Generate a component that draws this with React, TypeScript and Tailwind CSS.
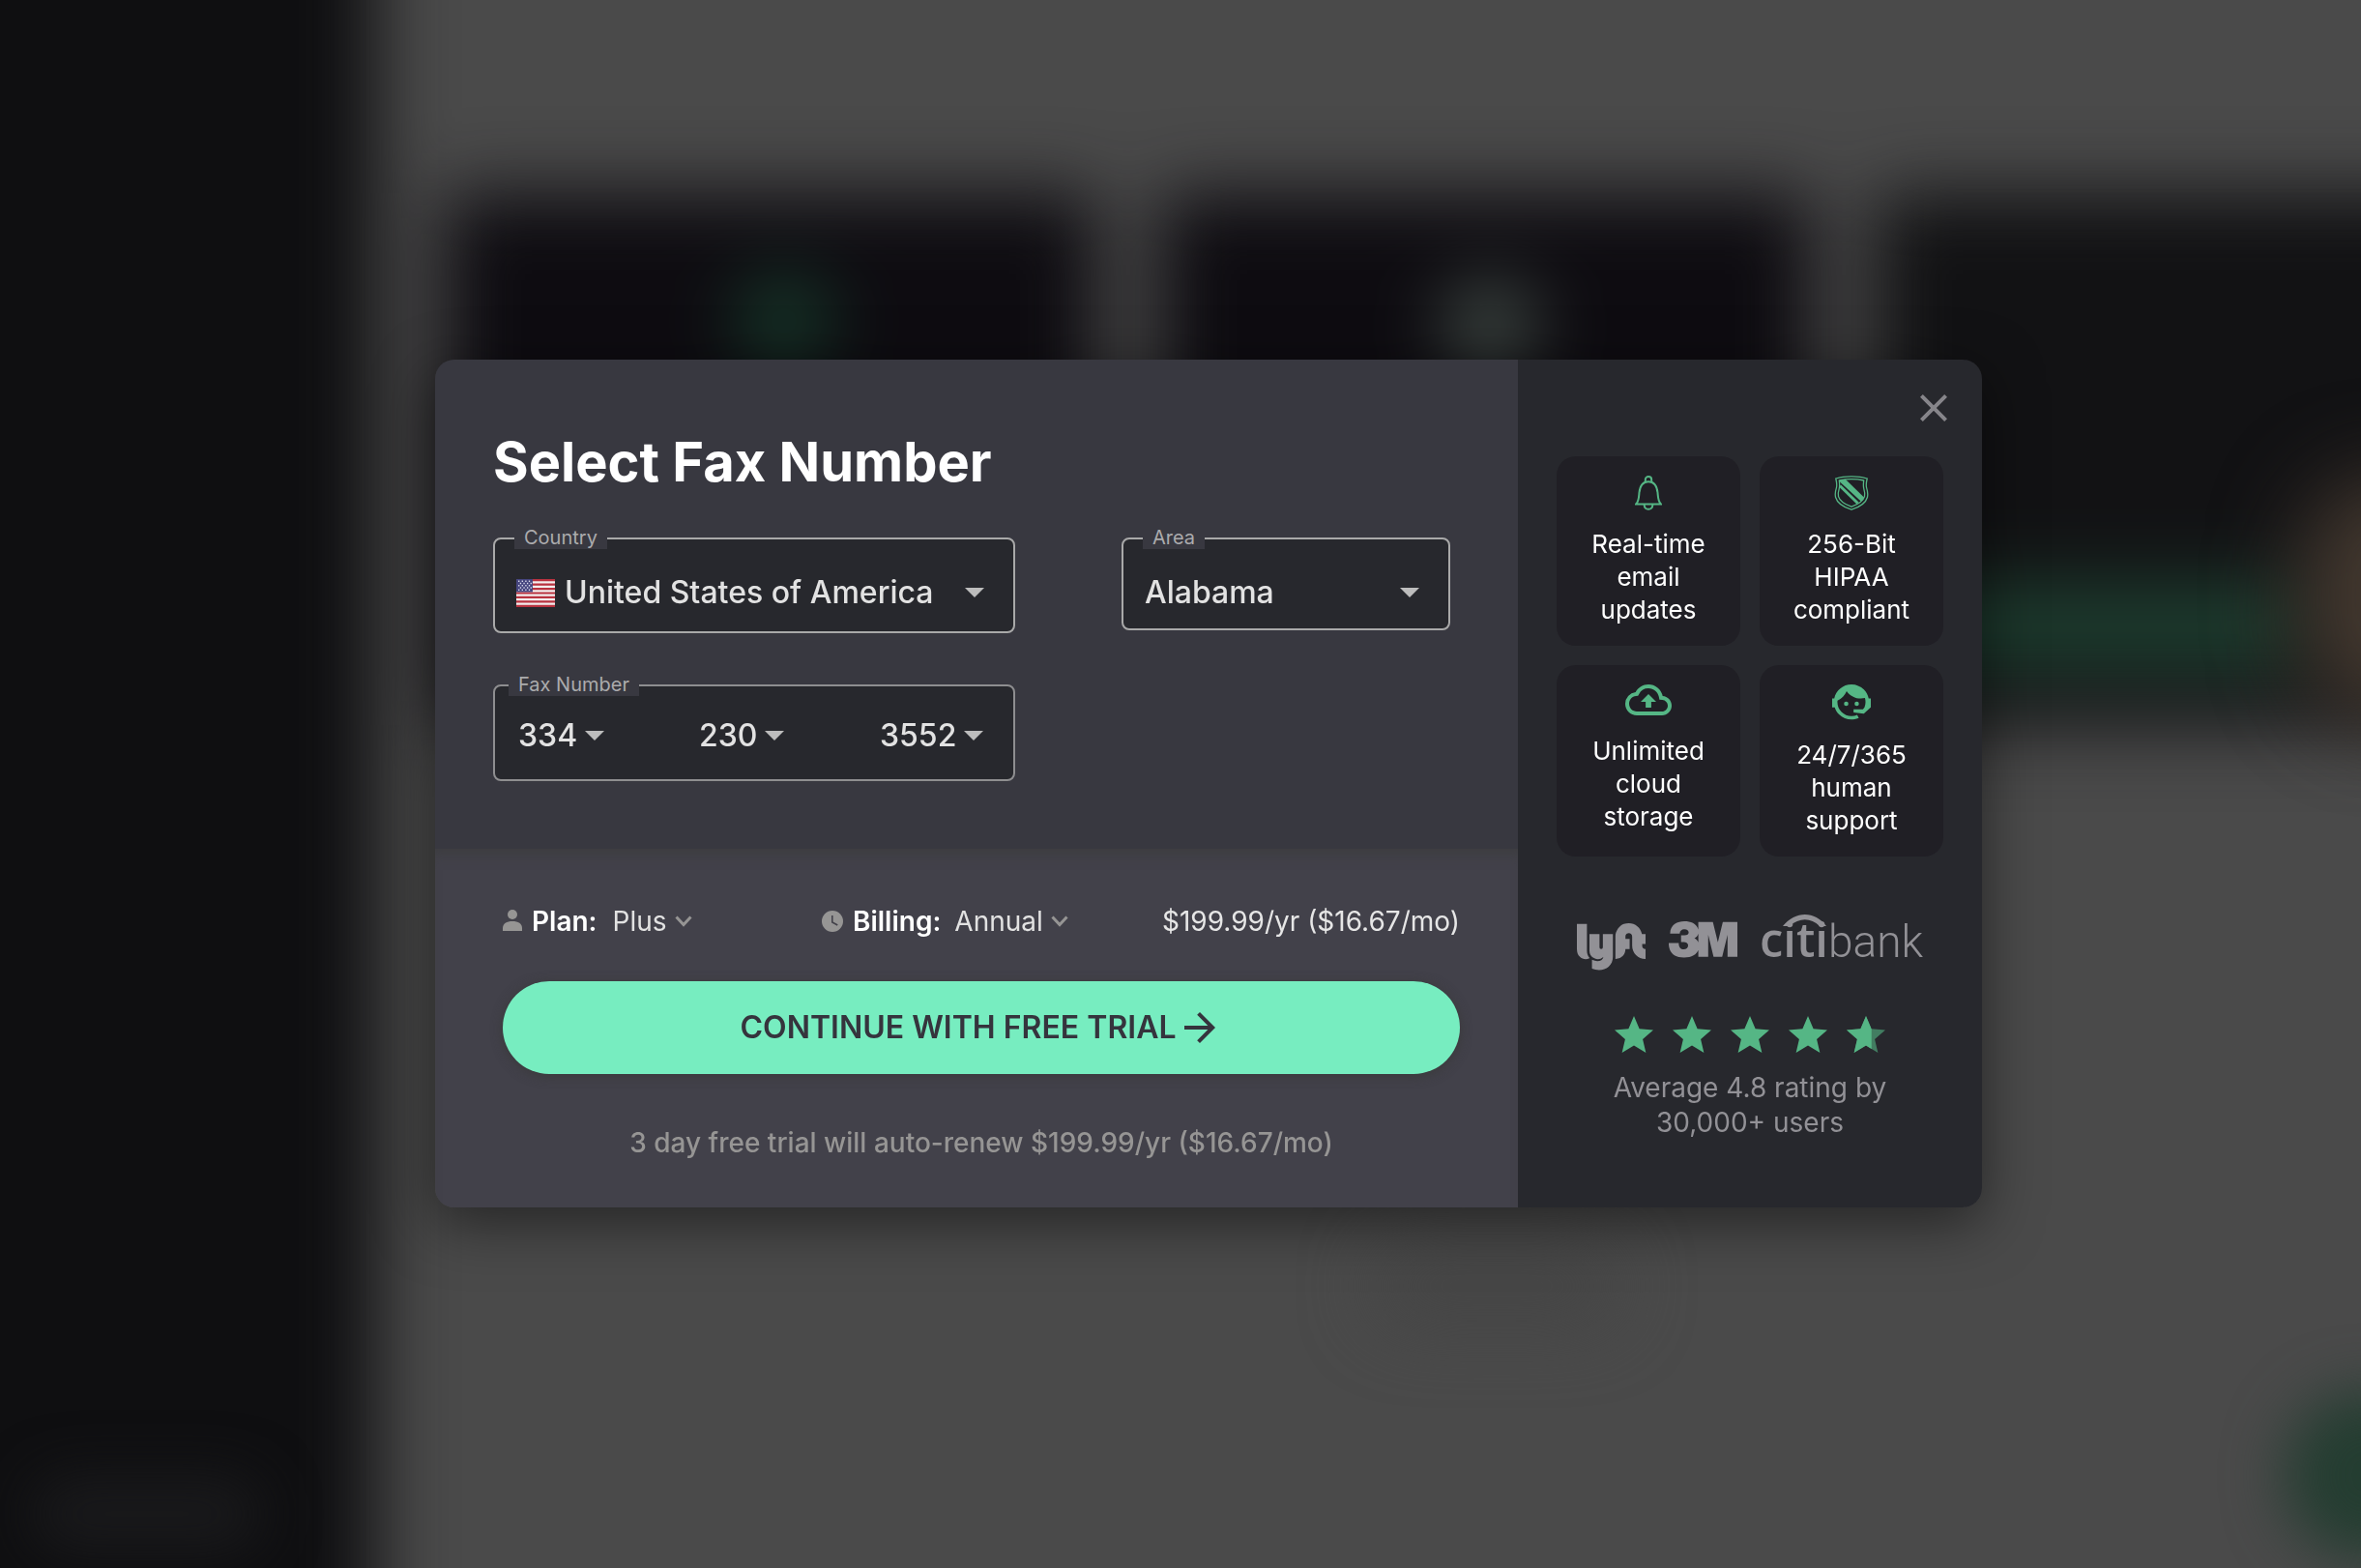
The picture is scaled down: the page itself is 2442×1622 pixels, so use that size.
import type { ReactNode } from "react";
import { MdArrowForward, MdClose, MdOutlineCloudUpload, MdStar } from "react-icons/md";
import { Si3M, SiLyft } from "react-icons/si";

type Feature = {
  label: string;
  icon: ReactNode;
};

const FEATURES: Feature[] = [
  { label: "Real-time email updates", icon: <BellIcon /> },
  { label: "256-Bit HIPAA compliant", icon: <ShieldIcon /> },
  {
    label: "Unlimited cloud storage",
    icon: <MdOutlineCloudUpload viewBox="0 4 24 17" className="h-[34px] w-12" />,
  },
  { label: "24/7/365 human support", icon: <AgentIcon /> },
];

const FAX_PARTS = [
  { label: "Area code", value: "334" },
  { label: "Prefix", value: "230" },
  { label: "Line number", value: "3552" },
];

function Caret() {
  return (
    <svg viewBox="0 0 20 10" className="pointer-events-none h-2.5 w-5 shrink-0 fill-[#bdbdbd]">
      <path d="M0 0h20L10 10z" />
    </svg>
  );
}

function Chevron() {
  return (
    <svg viewBox="0 0 18 12" className="pointer-events-none h-3 w-[18px] shrink-0">
      <path d="M1.5 1.5 9 9.5l7.5-8" fill="none" stroke="#969594" strokeWidth="3" />
    </svg>
  );
}

function BellIcon() {
  return (
    <svg viewBox="0 0 28 36" className="h-9 w-7" fill="none" stroke="#55b685" strokeWidth="2">
      <path d="M10.800 7V4.200C10.800 2.200 12.200 1 14 1s3.200 1.200 3.200 3.200V7" />
      <path d="M1 29.600h26c-2.600-2.200-3-6-3.300-10-.4-7-2.500-13.300-9.700-13.300S4.700 12.600 4.300 19.600C4 23.600 3.600 27.400 1 29.600z" />
      <path d="M9.600 30c.2 3 2 4.800 4.400 4.800s4.200-1.800 4.400-4.800" />
    </svg>
  );
}

function ShieldIcon() {
  return (
    <svg viewBox="0 0 36 36" className="size-9" fill="none" stroke="#55b685">
      <path
        strokeWidth="1.300"
        d="M1.800 3C7 1.300 12 .8 18 .8S29 1.300 34.200 3c-.8 3.500-1.500 6.600-.6 9.600 1.200 3.800 1.600 6.800.8 9.900C32.600 29 25 33 18 35.200 11 33 3.400 29 1.600 22.500c-.8-3.100-.4-6.100.8-9.900.9-3 .2-6.100-.6-9.600z"
      />
      <path
        strokeWidth="1.300"
        d="M5.300 5C9.600 4 13.500 3.700 18 3.700S26.400 4 30.700 5c-.4 3.300-.7 6 .1 8.600 1 3.400 1.400 5.600.7 8C30 26.600 24 30 18 32.200 12 30 6 26.600 4.500 21.600c-.7-2.400-.3-4.600.7-8C6 11 5.700 8.300 5.300 5z"
      />
      <path fill="#55b685" stroke="none" d="M6 4.800c2-.6 3.800-.8 6-.9L31 22.500c-.6 1.900-1.400 3-3 4.200L6 6.500z" />
      <path strokeWidth="3" d="M6 10.500 24.500 28.500" />
    </svg>
  );
}

function AgentIcon() {
  return (
    <svg viewBox="2 2.9 20 19" className="h-[38px] w-10" fill="currentColor">
      <path d="M18.720 14.760c.35-.85.54-1.760.54-2.760 0-.72-.11-1.410-.3-2.050-.65.15-1.330.23-2.040.23-3.060 0-5.770-1.510-7.420-3.840-.89 2.160-2.590 3.920-4.730 4.880-.04.25-.04.52-.04.78A7.270 7.270 0 0 0 12 19.270c1.050 0 2.060-.23 2.970-.64.57 1.090.83 1.630.81 1.630-1.640.55-2.910.82-3.780.82-2.420 0-4.730-.95-6.430-2.660-1.040-1.040-1.810-2.310-2.240-3.690H2v-4.550h1.090C3.930 6.040 7.600 2.920 12 2.920c2.400 0 4.710.95 6.420 2.660 1.270 1.260 2.120 2.870 2.470 4.600H22v4.550h-.06L18.380 18l-5.300-.6v-1.670h4.830l.81-.97z" />
      <circle cx="9.270" cy="12.910" r="1.140" />
      <circle cx="14.720" cy="12.910" r="1.140" />
    </svg>
  );
}

function UsFlag() {
  return (
    <svg viewBox="0 0 39 26" preserveAspectRatio="none" className="h-[29px] w-10 shrink-0">
      <path fill="#f3eeee" d="M0 0h39v26H0z" />
      <path
        stroke="#b9323f"
        strokeWidth="2"
        d="M0 1h39M0 5h39M0 9h39M0 13h39M0 17h39M0 21h39M0 25h39"
      />
      <path fill="#46467f" d="M0 0h16.500v12H0z" />
      <path
        stroke="#d9d9ea"
        strokeWidth="1.300"
        strokeDasharray="1.300 2.200"
        d="M2 2h13M3.700 4h12M2 6h13M3.700 8h12M2 10h13"
      />
    </svg>
  );
}

function CitibankLogo() {
  return (
    <svg
      viewBox="0 0 168 58"
      className="h-[58px] w-[168px] overflow-visible fill-[#929196]"
      role="img"
      aria-label="citibank"
    >
      <path d="M23 12C36-4 56-4 68 12h-7C52 3 40 3 30 12z" />
      <text x="-1" y="44" fontSize="49" fontFamily="'Open Sans', sans-serif" fontWeight="600">
        citi
      </text>
      <text x="168" y="44" fontSize="46" fontFamily="Roboto, sans-serif" fontWeight="300" textAnchor="end">
        bank
      </text>
    </svg>
  );
}

/** Blurred dashboard that sits behind the modal. */
function Backdrop() {
  return (
    <div aria-hidden="true" className="fixed inset-0 overflow-hidden bg-[#4a4a4a]">
      <div className="flex h-full blur-[38px]">
        <div className="-my-24 -ml-24 w-[484px] shrink-0 bg-[#0f0f11]" />
        <div className="flex shrink-0 gap-[66px] pl-[72px] pt-[200px]">
          <div className="flex h-[550px] w-[674px] justify-center bg-[#0e0c11] pl-7 pt-[84px]">
            <div className="size-24 rounded-full bg-[#173a2b]" />
          </div>
          <div className="flex h-[550px] w-[674px] justify-center bg-[#0e0c11] pl-2 pt-[90px]">
            <div className="size-24 rounded-full bg-[#414b46]" />
          </div>
          <div className="h-[550px] w-[674px] bg-[#121214] pt-[404px]">
            <div className="h-[90px] w-[440px] bg-[#1d3d2f]" />
          </div>
        </div>
      </div>
      <div className="absolute -right-32 top-[490px] h-64 w-48 rounded-full bg-[#43382f] blur-[44px]" />
      <div className="absolute -right-24 bottom-2 size-44 rounded-full bg-[#243d31] blur-[30px]" />
      <div className="absolute left-[1420px] top-[1290px] h-20 w-64 rounded-full bg-[#454545] blur-[36px]" />
      <div className="absolute bottom-4 left-8 h-20 w-60 rounded-full bg-[#19191b] blur-[28px]" />
    </div>
  );
}

function NumberForm() {
  return (
    <section className="bg-[#383840] pb-[70px] pl-[60px] pr-[70px] pt-[70px]">
      <h1 className="text-[56px] font-bold leading-[72px] text-white">Select Fax Number</h1>

      <div className="mt-[42px] flex items-start justify-between">
        <div className="relative flex h-[99px] w-[540px] items-center rounded-lg border-2 border-[#a9a9a9] bg-[#27282d] pl-[22px] pr-[30px] pt-4">
          <label
            htmlFor="country"
            className="absolute -top-[18px] left-5 h-7 bg-[#383840] px-2.5 text-[20px] leading-8 text-[#ababad]"
          >
            Country
          </label>
          <UsFlag />
          <select
            id="country"
            className="ml-2.5 min-w-0 flex-1 appearance-none bg-transparent text-[32px] font-medium leading-10 text-[#e2e2e2]"
          >
            <option>United States of America</option>
          </select>
          <Caret />
        </div>

        <div className="relative flex h-24 w-[340px] items-center rounded-lg border-2 border-[#a9a9a9] bg-[#27282d] pl-[22px] pr-[30px] pt-[18px]">
          <label
            htmlFor="area"
            className="absolute -top-[18px] left-5 h-7 bg-[#383840] px-2.5 text-[20px] leading-8 text-[#ababad]"
          >
            Area
          </label>
          <select
            id="area"
            className="min-w-0 flex-1 appearance-none bg-transparent text-[32px] font-medium leading-10 text-[#e2e2e2]"
          >
            <option>Alabama</option>
          </select>
          <Caret />
        </div>
      </div>

      <div
        role="group"
        aria-labelledby="fax-label"
        className="relative mt-[53px] grid h-[100px] w-[540px] grid-cols-[187px_187px_1fr] items-center rounded-lg border-2 border-[#8e8e90] bg-[#27282d] pl-6 pt-1.5"
      >
        <span
          id="fax-label"
          className="absolute -top-[18px] left-3.5 h-7 bg-[#383840] px-2.5 text-[20px] leading-8 text-[#ababad]"
        >
          Fax Number
        </span>
        {FAX_PARTS.map((part) => (
          <div key={part.label} className="flex items-center gap-2">
            <select
              aria-label={part.label}
              className="field-sizing-content appearance-none bg-transparent text-[32px] font-medium leading-10 text-[#e2e2e2]"
            >
              <option>{part.value}</option>
            </select>
            <Caret />
          </div>
        ))}
      </div>
    </section>
  );
}

function PlanForm() {
  return (
    <section className="flex-1 bg-[#42414a] pb-[50px] pl-[70px] pr-[60px] pt-[58px] text-[28px] leading-[34px] shadow-[inset_0_14px_14px_-8px_#3d3d40]">
      <div className="flex items-center justify-between">
        <div className="flex w-[330px] items-center">
          <svg viewBox="0 0 20 24" className="h-6 w-5 fill-[#969594]">
            <circle cx="10" cy="5" r="5" />
            <path d="M0 22v-3c0-4.500 4-7 10-7s10 2.500 10 7v3z" />
          </svg>
          <label htmlFor="plan" className="ml-2.5 font-semibold text-white">
            Plan:
          </label>
          <select
            id="plan"
            className="field-sizing-content ml-4 mr-2 appearance-none bg-transparent text-[#e2e2e2]"
          >
            <option>Plus</option>
          </select>
          <Chevron />
        </div>
        <div className="flex flex-1 items-center">
          <svg viewBox="0 0 22 22" className="size-[22px]">
            <circle cx="11" cy="11" r="11" fill="#969594" />
            <path d="M10.800 5v7l5.500 3" fill="none" stroke="#42414a" strokeWidth="1.600" />
          </svg>
          <label htmlFor="billing" className="ml-2.5 font-semibold text-white">
            Billing:
          </label>
          <select
            id="billing"
            className="field-sizing-content ml-3.5 mr-2 appearance-none bg-transparent text-[#e2e2e2]"
          >
            <option>Annual</option>
          </select>
          <Chevron />
        </div>
        <p className="text-[#e6e6e6]">$199.99/yr ($16.67/mo)</p>
      </div>

      <button
        type="button"
        className="mt-[45px] flex h-24 w-full items-center justify-center rounded-full bg-[#77edc0] text-[32px] font-semibold text-[#35343d] shadow-[0_2px_12px_rgba(56,56,56,0.9)]"
      >
        CONTINUE WITH FREE TRIAL
        <MdArrowForward className="size-12" />
      </button>

      <p className="mt-[54px] text-center font-medium text-[#969594]">
        3 day free trial will auto-renew $199.99/yr ($16.67/mo)
      </p>
    </section>
  );
}

function Benefits() {
  return (
    <aside className="relative w-[480px] shrink-0 bg-[#27282d] px-10 pt-[100px]">
      <button type="button" aria-label="Close" className="absolute right-[26px] top-[26px] text-[#86858a]">
        <MdClose className="size-12" />
      </button>

      <ul className="grid grid-cols-2 gap-5">
        {FEATURES.map((feature) => (
          <li
            key={feature.label}
            className="flex flex-col items-center gap-[18px] rounded-[20px] bg-[#201f25] p-5 text-center text-[26px] leading-[34px] text-white"
          >
            <span className="text-[#55b685]">{feature.icon}</span>
            {feature.label}
          </li>
        ))}
      </ul>

      <div className="mt-[60px] flex justify-center gap-6 text-[#929196]">
        <SiLyft viewBox="0 0.800 24 19.600" className="h-[58px] w-[71px]" title="Lyft" />
        <Si3M viewBox="0 3.300 24 19.600" className="h-[58px] w-[71px]" title="3M" />
        <CitibankLogo />
      </div>

      <div className="mt-[43px] flex justify-center gap-3 text-[#55b685]" role="img" aria-label="4.8 out of 5 stars">
        <MdStar className="size-12" />
        <MdStar className="size-12" />
        <MdStar className="size-12" />
        <MdStar className="size-12" />
        {/* last star is only partly lit */}
        <span className="relative">
          <MdStar className="size-12 opacity-60" />
          <MdStar className="absolute inset-0 size-12 [clip-path:inset(0_38%_0_0)]" />
        </span>
      </div>
      <p className="mx-auto mt-3 w-[300px] text-center text-[28px] leading-9 text-[#929196]">
        Average 4.8 rating by 30,000+ users
      </p>
    </aside>
  );
}

export default function App() {
  return (
    <div className="min-h-screen font-[Inter,sans-serif]">
      <Backdrop />
      <main className="relative flex min-h-screen items-center justify-center pb-0.5 pl-[58px]">
        <div
          role="dialog"
          aria-label="Select Fax Number"
          className="flex w-full max-w-[1600px] overflow-hidden rounded-[20px] shadow-[0_16px_60px_rgba(0,0,0,0.5)]"
        >
          <div className="flex min-w-0 flex-1 flex-col">
            <NumberForm />
            <PlanForm />
          </div>
          <Benefits />
        </div>
      </main>
    </div>
  );
}
